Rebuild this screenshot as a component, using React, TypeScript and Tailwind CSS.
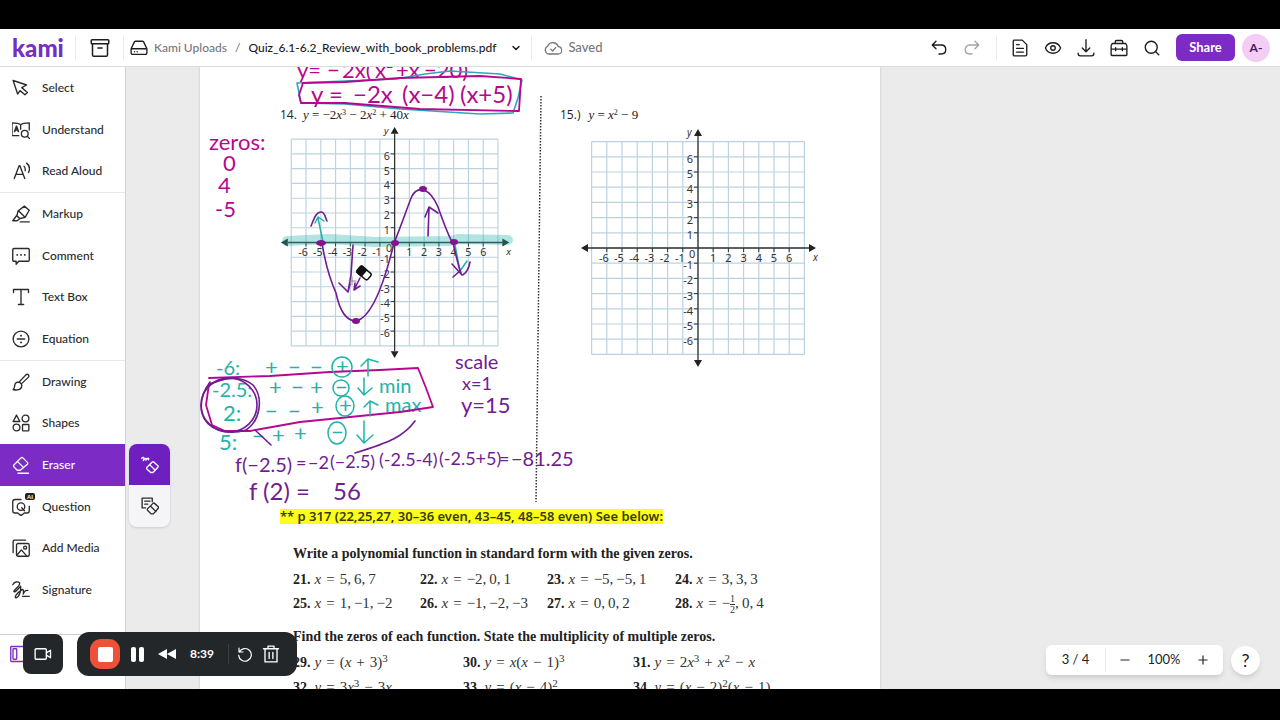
import React from 'react';
import clsx from 'clsx';
import { ChevronDown, Eye, Minus, Plus, Search } from 'lucide-react';

interface IconProps {
    children: React.ReactNode;
    className?: string;
}

function Icon({ children, className = 'size-[18px]' }: IconProps) {
    return (
        <svg
            viewBox="0 0 24 24"
            className={clsx('shrink-0', className)}
            fill="none"
            stroke="currentColor"
            strokeWidth="1.8"
            strokeLinecap="round"
            strokeLinejoin="round"
            aria-hidden="true"
        >
            {children}
        </svg>
    );
}

interface Tool {
    label: string;
    icon: React.ReactNode;
    divider?: boolean;
    active?: boolean;
}

const tools: Tool[] = [
    { label: 'Select', icon: <path d="M1.500 2 19.500 8l-6.500 3.500 7.500 6.500-3.200 3-6.600-5.500L7.500 20z" /> },
    {
        label: 'Understand',
        icon: (
            <>
                <path d="M11.500 5C9.500 3 6 2.500 0 2.500v17h9M11.500 5C13.500 3 17 2.500 23 2.500V12M11.500 5v6" />
                <path d="M3.500 14 6 7l2.500 7M4.500 12h3" strokeWidth="2.200" />
                <circle cx="17" cy="17" r="4.500" />
                <path d="m20.500 20.500 3 3" />
            </>
        ),
    },
    {
        label: 'Read Aloud',
        icon: <path d="M3 22 9.500 5h1L17 22M5.500 16.500h9.500M16 5.500c1.500 1.500 2 3.500 1.500 6M19.500 1.500c4 3.500 4.500 8.500 2.500 12.500" />,
        divider: true,
    },
    {
        label: 'Markup',
        icon: <path d="m8 8 8.500-6.500L23 7l-5.500 9.500-7 1.500-4-3.500zM7 13l-6 8h6l3.500-3M9 8l8 8M11 22.500h12" />,
    },
    {
        label: 'Comment',
        icon: (
            <>
                <path d="M2.500 2h19a1.500 1.500 0 0 1 1.500 1.500v14a1.500 1.500 0 0 1-1.500 1.500H9l-3.500 4v-4h-3A1.500 1.500 0 0 1 1 17.500v-14A1.500 1.500 0 0 1 2.500 2z" />
                <path d="M7 10.500h.1M12 10.500h.1M17 10.500h.1" strokeWidth="2.400" />
            </>
        ),
    },
    { label: 'Text Box', icon: <path d="M2 6V2h20v4M12 2v20M8.500 22h7" /> },
    {
        label: 'Equation',
        icon: (
            <>
                <circle cx="12" cy="12" r="10.500" />
                <path d="M7 12h10" />
                <path d="M12 7.500h.1M12 16.500h.1" strokeWidth="2.600" />
            </>
        ),
        divider: true,
    },
    {
        label: 'Drawing',
        icon: <path d="m9.500 12 9-9.500c2.500-2 5 .5 3.500 3L12.500 14.500M9.500 12c-4 0-6 2-6 5.500 0 2-1 3.500-2 4.500 5 1.500 11 .5 11.500-4.500.1-1.500 0-2-.5-3zM9.500 12l3 2.500" />,
    },
    {
        label: 'Shapes',
        icon: (
            <>
                <path d="m6 1.500 4.500 8.500h-9z" />
                <circle cx="18" cy="6" r="4.500" />
                <circle cx="6" cy="18" r="4.500" />
                <rect x="14" y="14" width="8.500" height="8.500" rx="1" />
            </>
        ),
    },
    {
        label: 'Eraser',
        icon: <path d="m2.500 12 9.500-9.500a2 2 0 0 1 2.500 0l6 6a2 2 0 0 1 0 2.500L11 19H7l-4.500-4.500a2 2 0 0 1 0-2.500zM7.500 7.500l8 8M8 23h14" />,
        active: true,
    },
    {
        label: 'Question',
        icon: (
            <>
                <path d="M12 2H4a3 3 0 0 0-3 3v12a3 3 0 0 0 3 3h3.500l4.500 3.500 4.500-3.500H20a3 3 0 0 0 3-3v-6" />
                <circle cx="12" cy="11.500" r="5" />
                <path d="m13 13 3.500 4" />
            </>
        ),
    },
    {
        label: 'Add Media',
        icon: (
            <>
                <rect x="6" y="6" width="17" height="17" rx="2" />
                <path d="M1.500 18V3.500a2 2 0 0 1 2-2H18M7 21l5.500-6.500 7 8" />
                <circle cx="17.500" cy="11.500" r="2" />
            </>
        ),
    },
    {
        label: 'Signature',
        icon: <path d="M1 5c2-4 7-5 9-2.500C12 7 2 11 2.500 14c1 2.500 7-5 9-7 .5 5-1 14-6 15.500-3 0 0-6 8-11 2-1 2 3 1.500 6 1-3 3-5.500 6-5M14 20.500h9" />,
    },
];

function Divider() {
    return <span className="block h-6 w-px shrink-0 bg-[#ececec]" />;
}

function TopBar() {
    return (
        <header className="flex h-[38px] shrink-0 items-center border-b border-[#dcdcdc] bg-white pr-[10px] pl-3 text-[12px] font-medium text-[#1d1d1f]">
            <a href="#home" className="w-[63px] font-['Lato'] text-[24px] leading-6 font-black text-[#7430c0]">kami</a>
            <Divider />
            <button type="button" aria-label="Archive" className="flex w-[47px] justify-center">
                <Icon className="size-5">
                    <rect x="1.500" y="2" width="21" height="5" rx="1" />
                    <path d="M3 7v13.500a1.500 1.500 0 0 0 1.500 1.500h15a1.500 1.500 0 0 0 1.500-1.500V7M9.500 12h5" />
                </Icon>
            </button>
            <Divider />
            <nav className="ml-[6px] flex items-center gap-[6px]" aria-label="Breadcrumb">
                <Icon>
                    <path d="M1.500 13 5.500 4.500A2 2 0 0 1 7.500 3h9a2 2 0 0 1 2 1.500L22.500 13v5.500a2 2 0 0 1-2 2h-17a2 2 0 0 1-2-2zM1.500 13h21M6 17h.1M9.500 17h.1" />
                </Icon>
                <a href="#uploads" className="text-[#77777b]">Kami Uploads</a>
                <span className="px-[2px] text-[#77777b]">/</span>
                <button type="button" className="flex items-center gap-[14px] whitespace-nowrap">
                    Quiz_6.1-6.2_Review_with_book_problems.pdf
                    <ChevronDown className="size-3" strokeWidth={3} />
                </button>
            </nav>
            <span className="ml-[9px]"><Divider /></span>
            <span className="ml-3 flex items-center gap-[6px] text-[13px] text-[#77777b]">
                <Icon>
                    <path d="M6.500 20h12a5 5 0 0 0 .5-10A7.500 7.500 0 0 0 5 9.500 5.500 5.500 0 0 0 6.500 20zM9 13.500l2.500 2.500 4-4.500" />
                </Icon>
                Saved
            </span>

            <div className="ml-auto flex items-center">
                <button type="button" aria-label="Undo" className="mr-[15px]">
                    <Icon><path d="M8 3 3 8l5 5M3 8h12c8 0 8 12 0 12h-3" /></Icon>
                </button>
                <button type="button" aria-label="Redo" className="mr-[15px] text-[#a3a3a6]">
                    <Icon><path d="m16 3 5 5-5 5M21 8H9c-8 0-8 12 0 12h3" /></Icon>
                </button>
                <Divider />
                <div className="mr-[15px] ml-[14px] flex items-center gap-[15px]">
                    <button type="button" aria-label="Pages">
                        <Icon><path d="M4 1.500h11l6 6V21a1.500 1.500 0 0 1-1.500 1.500h-15A1.500 1.500 0 0 1 3 21V3a1.500 1.500 0 0 1 1-1.500zM7.500 7.500H11M7.500 12.500h9M7.500 17.500h9" /></Icon>
                    </button>
                    <button type="button" aria-label="View"><Eye className="size-[18px]" strokeWidth={1.8} /></button>
                    <button type="button" aria-label="Download">
                        <Icon><path d="M12 1v16M7 12l5 5 5-5M1.500 19c0 2.500 1 3.500 3 3.500h15c2 0 3-1 3-3.500" /></Icon>
                    </button>
                    <button type="button" aria-label="Toolbox">
                        <Icon><path d="M7 6V3.500A1.500 1.500 0 0 1 8.500 2h7A1.500 1.500 0 0 1 17 3.500V6M3 6h18l1.500 3v12a1 1 0 0 1-1 1h-19a1 1 0 0 1-1-1V9zM1.500 13.500h21M7.500 11.500v4M16.500 11.500v4" /></Icon>
                    </button>
                    <button type="button" aria-label="Search"><Search className="size-[18px]" strokeWidth={1.8} /></button>
                </div>
                <button type="button" className="h-[27px] w-[59px] rounded-md bg-[#7c2bc4] text-[13px] font-bold text-white">Share</button>
                <button type="button" className="ml-[7px] size-7 rounded-full bg-[#f3cdf4] font-bold text-[#4a1766]">A-</button>
            </div>
        </header>
    );
}

function EraserMenu() {
    return (
        <div className="absolute top-0 left-full z-20 ml-1 w-[41px] overflow-hidden rounded-lg bg-[#f5f5f8] shadow">
            <button type="button" aria-label="Erase ink" className="flex h-[41px] w-full items-center justify-center bg-[#6f1fc0] text-white">
                <Icon>
                    <path d="m8 15 7-7a1.500 1.500 0 0 1 2 0l5.500 5a1.500 1.500 0 0 1 0 2l-6.500 7h-3L8 17.500a1.500 1.500 0 0 1 0-2.500zM11.500 11.500l7.500 7.500M1 3c2-2.500 4-1 2 3 2.500-3.500 5-4 3.500-.5C9 2.500 11 2 10 5" />
                </Icon>
            </button>
            <button type="button" aria-label="Erase annotations" className="flex h-[42px] w-full items-center justify-center">
                <Icon>
                    <path d="M6 14.500H1.500v-13H15V6M5 5.500h7M5 9.500h4M9 15.500l7-7a1.500 1.500 0 0 1 2 0l5 4.500a1.500 1.500 0 0 1 0 2l-6.500 7.500h-3L9 18a1.500 1.500 0 0 1 0-2.500zM12.500 12l7.500 7.500" />
                </Icon>
            </button>
        </div>
    );
}

function Sidebar() {
    return (
        <aside className="flex w-[126px] shrink-0 flex-col border-r border-[#d2d2d2] bg-white text-[12px] font-medium text-[#2b2b2d]">
            <ul className="flex flex-1 flex-col pb-[23px]">
                {tools.map((tool) => (
                    <li key={tool.label} className={clsx('relative flex-1', tool.divider && 'border-b border-[#e6e6e6]')}>
                        <button
                            type="button"
                            className={clsx('flex h-full w-full items-center gap-3 pl-3', tool.active && 'bg-[#7c2bc4] text-white')}
                        >
                            <Icon>{tool.icon}</Icon>
                            {tool.label}
                        </button>
                        {tool.label === 'Question' && (
                            <span className="absolute top-[7px] left-[25px] rounded-xs bg-[#222] px-[2px] text-[6px] leading-[7px] font-bold text-white">AI</span>
                        )}
                        {tool.active && <EraserMenu />}
                    </li>
                ))}
            </ul>
            <div className="h-[55px] border-t border-[#cfcfcf] pt-[10px] pl-[10px] text-[#7c2bc4]">
                <Icon>
                    <rect x="1" y="2" width="22" height="20" rx="1" />
                    <rect x="4" y="5" width="5" height="14" rx="1" />
                </Icon>
            </div>
        </aside>
    );
}

const ticks = [-6, -5, -4, -3, -2, -1, 1, 2, 3, 4, 5, 6];
const gridLines = [-7, -6, -5, -4, -3, -2, -1, 0, 1, 2, 3, 4, 5, 6, 7];
const unit = 15.2;

function Graph({ className }: { className: string }) {
    return (
        <svg viewBox="-118 -122 244 244" className={clsx('block overflow-visible', className)} fontFamily="Noto Sans, sans-serif" fontSize="11" fill="#333">
            {gridLines.map((n) => (
                <path key={n} d={`M${n * unit} -106.400V106.400M-106.400 ${n * unit}H106.400`} stroke="#bcd3df" strokeWidth="1.200" />
            ))}
            <path d="M-110 0H112M0 -112V112" stroke="#333" strokeWidth="1.300" />
            <path d="M-117 0l7-4v8zM118 0l-7-4v8zM0 -119l-4 7h8zM0 119l-4-7h8z" fill="#222" />
            {ticks.map((n) => (
                <g key={n}>
                    <path d={`M${n * unit} 0v4M0 ${n * unit}h-4`} stroke="#333" />
                    <text x={n > 0 ? n * unit : n * unit - 3} y="14" textAnchor="middle">{n}</text>
                    <text x="-5" y={6 - n * unit} textAnchor="end">{n}</text>
                </g>
            ))}
            <text x="-9" y="10">0</text>
            <text x="-11" y="-112" fontSize="10" fontStyle="italic">y</text>
            <text x="115" y="13" fontSize="10" fontStyle="italic">x</text>
        </svg>
    );
}

function Num({ children }: { children: React.ReactNode }) {
    return <b className="mr-1 text-[14px] text-[#222]">{children}.</b>;
}

function Sup({ children }: { children: React.ReactNode }) {
    return <sup className="text-[11px]">{children}</sup>;
}

function Op({ children }: { children: React.ReactNode }) {
    return <span className="mx-[5px]">{children}</span>;
}

// thin spaces keep the lists as tight as they are set in the book
const zeroSets: [number, React.ReactNode][] = [
    [21, '5,\u20096,\u20097'],
    [22, '−2,\u20090,\u20091'],
    [23, '−5,\u2009−5,\u20091'],
    [24, '3,\u20093,\u20093'],
    [25, '1,\u2009−1,\u2009−2'],
    [26, '−1,\u2009−2,\u2009−3'],
    [27, '0,\u20090,\u20092'],
    [
        28,
        <>
            −
            <span className="inline-flex flex-col text-center align-middle text-[10px] leading-[10px]">
                <span className="border-b border-[#333]">1</span>
                <span>2</span>
            </span>
            ,{'\u2009'}0,{'\u2009'}4
        </>,
    ],
];

const functions: [number, React.ReactNode][] = [
    [29, <>(<i>x</i><Op>+</Op>3)<Sup>3</Sup></>],
    [30, <><i>x</i>(<i>x</i><Op>−</Op>1)<Sup>3</Sup></>],
    [31, <>2<i>x</i><Sup>3</Sup><Op>+</Op><i>x</i><Sup>2</Sup><Op>−</Op><i>x</i></>],
    [32, <>3<i>x</i><Sup>3</Sup><Op>−</Op>3<i>x</i></>],
    [33, <>(<i>x</i><Op>−</Op>4)<Sup>2</Sup></>],
    [34, <>(<i>x</i><Op>−</Op>2)<Sup>2</Sup>(<i>x</i><Op>−</Op>1)</>],
];

const magenta = '#b5078f';
const teal = '#22b3a8';
const purple = '#701c93';

// [x, baseline, font size, words]
type Note = [number, number, number, string];

const magentaNotes: Note[] = [
    [297, 78, 22, 'y='],
    [327, 78, 22, '−'],
    [342, 78, 22, '2x('],
    [375, 78, 22, 'x²'],
    [396, 78, 22, '+x'],
    [424, 78, 22, '−20)'],
    [311, 103, 24, 'y'],
    [329, 103, 24, '='],
    [353, 103, 24, '−2x'],
    [402, 103, 24, '(x−4)'],
    [460, 103, 24, '(x+5)'],
    [209, 150, 22, 'zeros:'],
    [223, 171, 22, '0'],
    [218, 193, 22, '4'],
    [215, 217, 22, '-5'],
];

const tealNotes: Note[] = [
    [216, 375, 20, '-6:'],
    [265, 375, 22, '+'],
    [288, 375, 22, '−'],
    [310, 375, 22, '−'],
    [336, 374, 22, '+'],
    [212, 397, 20, '-2.5:'],
    [269, 395, 22, '+'],
    [291, 395, 22, '−'],
    [310, 395, 22, '+'],
    [335, 395, 22, '−'],
    [379, 393, 20, 'min'],
    [223, 421, 22, '2:'],
    [265, 419, 22, '−'],
    [288, 419, 22, '−'],
    [311, 415, 22, '+'],
    [339, 413, 22, '+'],
    [385, 412, 20, 'max'],
    [219, 450, 22, '5:'],
    [252, 444, 22, '−'],
    [272, 443, 22, '+'],
    [294, 441, 22, '+'],
    [331, 440, 22, '−'],
];

const purpleNotes: Note[] = [
    [455, 369, 20, 'scale'],
    [462, 390, 18, 'x=1'],
    [461, 413, 22, 'y=15'],
    [235, 472, 20, 'f(−2.5)'],
    [296, 469, 18, '='],
    [308, 469, 18, '−2'],
    [330, 468, 18, '(−2.5)'],
    [379, 466, 18, '(-2.5-4)'],
    [439, 465, 18, '(-2.5+5)'],
    [499, 465, 18, '='],
    [511, 466, 20, '−81.25'],
    [249, 500, 24, 'f (2) ='],
    [333, 500, 24, '56'],
];

function Notes({ notes, color }: { notes: Note[]; color: string }) {
    return (
        <g fill={color}>
            {notes.map(([x, y, size, words], i) => (
                <text key={i} x={x} y={y} fontSize={size}>{words}</text>
            ))}
        </g>
    );
}

function InkLayer() {
    return (
        <svg
            viewBox="200 67 680 622"
            className="pointer-events-none absolute top-0 left-0 h-[622px] w-[680px]"
            fontFamily="Lato, sans-serif"
            fill="none"
            strokeLinecap="round"
            strokeLinejoin="round"
        >
            <path d="M541 96 536 502" stroke="#333" strokeWidth="1.500" strokeDasharray="1.500 1.500" strokeLinecap="butt" />
            <path d="M287 241 330 239 375 242 450 241 458 239 508 240" stroke={teal} strokeOpacity="0.350" strokeWidth="10" />

            <Notes notes={magentaNotes} color={magenta} />
            <Notes notes={tealNotes} color={teal} />
            <Notes notes={purpleNotes} color={purple} />

            <g stroke="#2fa6bd" strokeWidth="1.600">
                <path d="M297 83 301 103 345 104 400 109 480 114 513 113 518 98 522 80 500 74 450 71 425 74 396 79 345 81 297 83" />
            </g>
            <g stroke={magenta} strokeWidth="1.800">
                <path d="M303 83 299 95 301 103 345 103 420 109 519 111 521 79 480 76 400 78 345 82 303 83" />
                <path d="M209 378 270 376 330 372 380 370 418 368 426 388 433 407 400 412 360 416 300 422 250 431 225 431 212 425 206 405 209 384 225 379" />
            </g>
            <g stroke={teal} strokeWidth="1.500">
                <circle cx="342" cy="367" r="10" />
                <circle cx="341" cy="388" r="8" />
                <ellipse cx="345" cy="406" rx="9" ry="10" />
                <ellipse cx="337" cy="433" rx="9" ry="11" />
                <path d="M368 376V359M361 366l7-7 10 3" />
                <path d="M364 378v17M358 388l6 7 8-7" />
                <path d="M370 416v-15M364 407l6-6 8 4" />
                <path d="M364 421v22M357 435l7 8 9-8" />
                <path d="M323 242 318 218M315 223l3-6 6 4M455 245 460 271 467 261" />
            </g>
            <g stroke={purple} strokeWidth="1.600">
                <path d="M311 226C314 219 316 212 321 212 325 212 325 217 327 221" />
                <path d="M322 243C326 268 332 284 336 293 340 312 347 321 356 321 372 318 385 280 394 243 402 224 408 205 412 196 418 185 430 188 438 207 444 224 449 238 453 243 456 254 458 266 461 273" />
                <path d="M452 264 462 275C466 274 469 268 470 262M453 277l7-6" />
                <path d="M353 245 351 275 348 292 339 283M348 292l2-8M360 278 354 290M355 283l-1 7 6-4" />
                <path d="M428 236 429 208M425 217l4-10 9 6" />
                <ellipse cx="229" cy="405" rx="28" ry="27" />
                <path d="M204 393C211 377 240 374 253 385 264 398 260 421 246 430 227 436 206 429 202 413 200 404 202 393 210 382" />
                <path d="M255 430 271 445M415 421C404 436 391 442 355 453" />
            </g>
            <g fill="#84138f">
                <ellipse cx="321" cy="243" rx="5" ry="3" />
                <ellipse cx="395" cy="243" rx="4" ry="3" />
                <ellipse cx="454" cy="242" rx="4" ry="3" />
                <ellipse cx="423" cy="189" rx="4" ry="3" />
                <ellipse cx="356" cy="321" rx="4" ry="3" />
            </g>

            <path d="M349 281h7M352 277v8" stroke="#888" />
            <g transform="rotate(40 364 273)" stroke="#111" strokeWidth="1.500">
                <rect x="357" y="269" width="14" height="8" rx="2" fill="#fff" />
                <path d="M358 269h6v8h-6z" fill="#111" />
            </g>
        </svg>
    );
}

function Worksheet() {
    return (
        <article className="relative ml-[74px] h-full w-[680px] overflow-hidden bg-white pt-[39px] shadow-[0_0_2px_#bbb]">
            <div className="grid h-[403px] grid-cols-[280px_1fr] pl-20 text-[#222]">
                <section>
                    <h2 className="flex h-[18px] items-center gap-[6px] font-['Open_Sans'] text-[12px] leading-4 whitespace-nowrap">
                        14.
                        <span className="font-['Liberation_Serif'] text-[13px]">
                            <i>y</i> = −2<i>x</i><sup className="text-[8px]">3</sup> − 2<i>x</i><sup className="text-[8px]">2</sup> + 40<i>x</i>
                        </span>
                    </h2>
                    <Graph className="size-[237px]" />
                </section>
                <section>
                    <h2 className="flex h-[18px] items-center gap-2 font-['Open_Sans'] text-[12px] leading-4">
                        15.)
                        <span className="font-['Liberation_Serif'] text-[13px]">
                            <i>y</i> = <i>x</i><sup className="text-[8px]">2</sup> − 9
                        </span>
                    </h2>
                    <Graph className="mt-[2px] ml-5 size-[244px]" />
                </section>
            </div>
            <p className="ml-20 h-[15px] w-fit bg-[#fcff1a] font-['Noto_Sans'] text-[13px] leading-[15px] font-semibold whitespace-nowrap text-[#3a3a10]">
                ** p 317 (22,25,27, 30–36 even, 43–45, 48–58 even) See below:
            </p>
            <div className="pt-5 pl-[93px] font-['Liberation_Serif'] text-[15px] leading-5 whitespace-nowrap text-[#333]">
                <h3 className="text-[14px] leading-5 font-bold text-[#222]">Write a polynomial function in standard form with the given zeros.</h3>
                <ul className="mt-[5px] grid grid-cols-[127px_127px_128px_1fr] gap-y-1">
                    {zeroSets.map(([n, zeros]) => (
                        <li key={n} className="h-5"><Num>{n}</Num><i>x</i><Op>=</Op>{zeros}</li>
                    ))}
                </ul>
                <h3 className="mt-[14px] text-[14px] leading-5 font-bold text-[#222]">Find the zeros of each function. State the multiplicity of multiple zeros.</h3>
                <ul className="mt-[5px] grid grid-cols-[170px_170px_1fr] gap-y-[5px]">
                    {functions.map(([n, rule]) => (
                        <li key={n} className="h-5"><Num>{n}</Num><i>y</i><Op>=</Op>{rule}</li>
                    ))}
                </ul>
            </div>
            <InkLayer />
        </article>
    );
}

function Recorder() {
    return (
        <div className="absolute bottom-[13px] left-[23px] z-30 flex items-center gap-[14px] text-white">
            <button type="button" aria-label="Camera" className="flex size-10 items-center justify-center rounded-lg bg-[#24272a]">
                <Icon>
                    <rect x="1.500" y="5" width="15" height="14" rx="1.500" />
                    <path d="m16.500 10.500 5.500-3.500v10l-5.500-3.500" />
                </Icon>
            </button>
            <div className="flex h-11 w-[220px] items-center rounded-xl bg-[#24272a] pl-[13px]">
                <button type="button" aria-label="Stop" className="flex size-[30px] items-center justify-center rounded-[11px] bg-[#ee5038]">
                    <span className="size-[15px] rounded-xs bg-white" />
                </button>
                <button type="button" aria-label="Pause" className="ml-[11px] flex gap-[3px]">
                    <span className="h-[15px] w-[5px] rounded-xs bg-white" />
                    <span className="h-[15px] w-[5px] rounded-xs bg-white" />
                </button>
                <button type="button" aria-label="Rewind" className="ml-[14px]">
                    <svg viewBox="0 0 18 12" className="h-3 w-[18px]" fill="currentColor" aria-hidden="true">
                        <path d="M9 1v10L0 6zM18 1v10L9 6z" />
                    </svg>
                </button>
                <time className="ml-[14px] text-[12px] font-bold">8:39</time>
                <span className="ml-[14px] h-5 w-px bg-[#3b3e41]" />
                <button type="button" aria-label="Restart" className="ml-[8px]">
                    <Icon className="size-4"><path d="M3 3v6h6M3.500 9a9.500 9.500 0 1 1-1 5" /></Icon>
                </button>
                <button type="button" aria-label="Delete" className="ml-[9px]">
                    <Icon><path d="M2 5h20M8 5V1.500h8V5M4 5v17.500h16V5M9.500 10v8M14.500 10v8" /></Icon>
                </button>
            </div>
        </div>
    );
}

function PageControls() {
    return (
        <div className="absolute right-5 bottom-[14px] z-30 flex items-center gap-2 text-[13px] text-[#222]">
            <div className="flex h-[30px] w-[177px] items-center rounded-md bg-white shadow-md">
                <span className="w-[59px] text-center">3 / 4</span>
                <Divider />
                <button type="button" aria-label="Zoom out" className="ml-3"><Minus className="size-[14px]" /></button>
                <span className="w-[64px] text-center">100%</span>
                <button type="button" aria-label="Zoom in"><Plus className="size-[14px]" /></button>
            </div>
            <button type="button" aria-label="Help" className="size-[29px] rounded-full bg-white text-[18px] leading-none shadow-md">?</button>
        </div>
    );
}

export default function App() {
    return (
        <div className="flex h-screen flex-col bg-black pt-[29px] pb-[31px] font-['Lato',sans-serif]">
            <TopBar />
            <div className="relative flex min-h-0 flex-1">
                <Sidebar />
                <main className="min-w-0 flex-1 overflow-hidden bg-[#ebebeb]">
                    <Worksheet />
                </main>
                <Recorder />
                <PageControls />
            </div>
        </div>
    );
}
